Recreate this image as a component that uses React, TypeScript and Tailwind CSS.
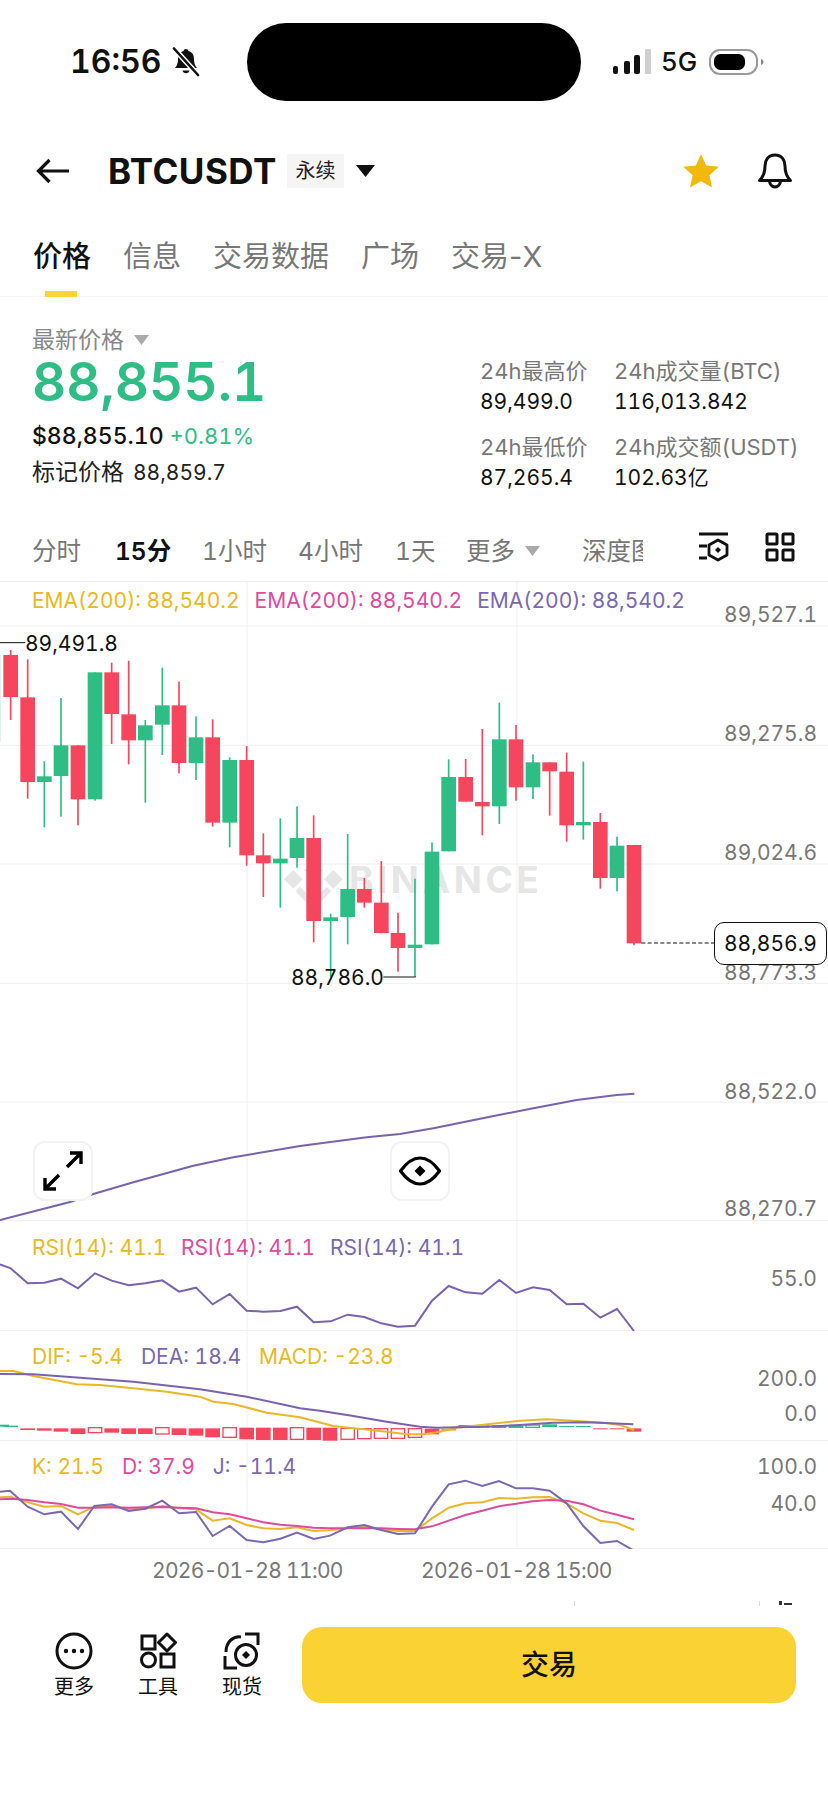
import React from 'react';

type C = [number, number, number, number, number, 0 | 1];
const candles: C[] = [
  [-2, 165, 165, 165, 425, 1],
  [32, 150, 165, 291, 360, 0],
  [83, 178, 292, 546, 596, 0],
  [133, 484, 529, 546, 682, 1],
  [183, 294, 436, 528, 650, 1],
  [234, 436, 436, 598, 676, 0],
  [285, 217, 217, 598, 602, 1],
  [335, 188, 217, 342, 432, 0],
  [386, 182, 343, 421, 493, 0],
  [436, 360, 376, 421, 608, 1],
  [487, 203, 316, 374, 465, 1],
  [537, 245, 316, 489, 520, 0],
  [588, 349, 412, 489, 540, 1],
  [638, 358, 412, 668, 680, 0],
  [689, 472, 480, 668, 742, 1],
  [740, 438, 480, 766, 797, 0],
  [790, 700, 766, 790, 891, 0],
  [841, 655, 776, 790, 923, 1],
  [891, 619, 714, 774, 803, 1],
  [941, 646, 714, 963, 1027, 0],
  [992, 941, 952, 963, 1130, 1],
  [1043, 702, 867, 951, 1033, 1],
  [1093, 834, 867, 908, 923, 0],
  [1144, 783, 908, 999, 1000, 0],
  [1194, 938, 999, 1044, 1115, 0],
  [1245, 836, 1034, 1044, 1130, 1],
  [1296, 727, 755, 1033, 1033, 1],
  [1346, 478, 531, 754, 754, 1],
  [1397, 477, 531, 605, 605, 0],
  [1447, 387, 606, 619, 706, 0],
  [1498, 308, 418, 619, 672, 1],
  [1548, 375, 418, 562, 602, 0],
  [1599, 463, 487, 562, 597, 1],
  [1649, 487, 487, 514, 647, 0],
  [1700, 458, 515, 676, 725, 0],
  [1750, 485, 666, 676, 719, 1],
  [1801, 639, 666, 834, 866, 0],
  [1851, 710, 737, 834, 874, 1],
  [1902, 735, 735, 1030, 1036, 0],
];

const pts = (a: number[][], dx = 0, dy = 0) => a.map(([x, y]) => `${x + dx},${y + dy}`).join(' ');

const ema = [[0, 600], [213, 545], [280, 522], [400, 487], [580, 437], [700, 412], [900, 378], [1100, 352], [1200, 342], [1300, 325], [1470, 290], [1600, 265], [1730, 240], [1850, 225], [1903, 221]];
const rsi = [[0, 733], [32, 745], [83, 790], [133, 788], [183, 776], [234, 805], [285, 760], [335, 782], [386, 796], [436, 790], [487, 781], [537, 815], [588, 803], [638, 853], [689, 822], [740, 872], [790, 875], [841, 873], [891, 860], [941, 907], [992, 904], [1043, 884], [1093, 891], [1144, 910], [1194, 920], [1245, 917], [1296, 842], [1346, 798], [1397, 817], [1447, 821], [1498, 780], [1548, 819], [1599, 802], [1649, 810], [1700, 853], [1750, 851], [1801, 893], [1851, 867], [1902, 933]];

const difA = [[0, -87], [40, -87], [100, -72], [230, -47], [300, -45], [400, -35], [500, -25], [600, -10], [640, 5], [700, 12], [800, 38], [900, 52]];
const difB = [[1000, 78], [1020, 80], [1090, 88], [1160, 95], [1220, 103], [1270, 103], [1320, 95], [1370, 83], [1470, 72], [1560, 62], [1640, 58], [1720, 62], [1810, 68], [1860, 75], [1902, 90]];
const deaA = [[0, -78], [100, -77], [200, -70], [400, -55], [600, -32], [740, -10], [900, 25]];
const deaB = [[960, 32], [1060, 48], [1160, 65], [1260, 80], [1310, 83], [1370, 82], [1460, 80], [1560, 75], [1660, 68], [1760, 67], [1900, 73]];

const jLine = [[0, 275], [30, 272], [83, 320], [133, 343], [183, 335], [234, 387], [283, 318], [335, 313], [386, 333], [436, 326], [487, 302], [537, 340], [588, 336], [638, 408], [689, 378], [740, 420], [790, 427], [841, 416], [891, 398], [941, 417], [990, 407], [1043, 382], [1093, 375], [1143, 390], [1194, 402], [1245, 400], [1296, 320], [1346, 253], [1396, 242], [1447, 258], [1497, 243], [1548, 265], [1598, 265], [1649, 272], [1700, 310], [1750, 378], [1801, 429], [1851, 423], [1902, 452]];
const kLine = [[0, 292], [32, 290], [83, 307], [133, 320], [183, 318], [234, 343], [283, 320], [335, 318], [386, 328], [436, 326], [487, 318], [537, 325], [588, 328], [638, 362], [689, 355], [740, 375], [790, 385], [841, 387], [891, 382], [941, 393], [990, 391], [1043, 385], [1093, 380], [1143, 388], [1194, 393], [1245, 393], [1296, 355], [1346, 323], [1396, 310], [1447, 307], [1497, 294], [1548, 296], [1598, 292], [1649, 291], [1700, 310], [1750, 340], [1801, 362], [1851, 369], [1902, 390]];
const dLine = [[0, 298], [32, 296], [83, 300], [133, 307], [183, 312], [234, 323], [283, 323], [335, 322], [386, 323], [436, 322], [487, 321], [537, 323], [588, 325], [638, 337], [689, 343], [740, 355], [790, 367], [841, 374], [891, 378], [941, 383], [990, 385], [1043, 385], [1093, 385], [1143, 385], [1194, 387], [1245, 388], [1296, 379], [1346, 362], [1396, 345], [1447, 332], [1497, 319], [1548, 311], [1598, 304], [1649, 300], [1700, 302], [1750, 313], [1801, 332], [1851, 344], [1902, 358]];

type B = [number, number, number, 's' | 'h', string];
const R = '#f6465d';
const G = '#2ebd85';
const bars: B[] = [
  [5, 74, 80, 's', G], [32, 77, 81, 's', G], [83, 85, 90, 's', R], [133, 85, 92, 's', R], [183, 85, 95, 's', R], [234, 85, 102, 's', R],
  [285, 83, 98, 'h', R], [335, 85, 98, 's', R], [386, 85, 102, 's', R], [436, 85, 102, 's', R], [487, 83, 102, 'h', R], [537, 85, 105, 's', R],
  [588, 85, 107, 's', R], [638, 85, 112, 's', R], [689, 83, 112, 'h', R], [740, 83, 118, 's', R], [790, 83, 120, 's', R], [841, 83, 120, 's', R],
  [891, 83, 118, 'h', R], [941, 83, 120, 's', R], [990, 83, 122, 's', R], [1043, 85, 118, 'h', R], [1093, 86, 116, 'h', R], [1143, 86, 115, 'h', R],
  [1194, 86, 115, 'h', R], [1245, 86, 112, 'h', R], [1296, 86, 103, 's', R], [1346, 86, 92, 's', '#f0a030'],
  [1397, 75, 83, 's', G], [1447, 76, 83, 's', G], [1497, 76, 84, 's', G], [1548, 76, 84, 's', G], [1598, 75, 82, 'h', G], [1649, 73, 81, 's', G],
  [1700, 78, 81, 's', G], [1750, 78, 81, 's', G], [1801, 85, 88, 's', R], [1851, 85, 88, 's', R], [1902, 85, 95, 's', R],
];

const axis = 'absolute right-[11px] text-[21px] leading-[26px] text-[#777777]';
const yellow = 'text-[#e8b923]';
const pink = 'text-[#dd4ba0]';
const purple = 'text-[#7a68b0]';

function VLines({ y0, y1 }: { y0: number; y1: number }) {
  return (
    <>
      <line x1={741} x2={741} y1={y0} y2={y1} stroke="#f0f0f0" strokeWidth={3} />
      <line x1={1551} x2={1551} y1={y0} y2={y1} stroke="#f0f0f0" strokeWidth={3} />
    </>
  );
}

function Legend({ items, className }: { items: [string, string][]; className: string }) {
  return (
    <div className={`relative z-10 flex pl-[32px] text-[21px] leading-[26px] ${className}`}>
      {items.map(([t, c], i) => (
        <span key={i} className={c}>{t}</span>
      ))}
    </div>
  );
}

function BellSlash() {
  return (
    <svg width="30" height="30" viewBox="0 0 30 30">
      <path d="M15 2c-1.4 0-2.2.9-2.4 2C8.5 5 7 8.2 7 12c0 4.500-1 6.500-3 9h22c-2-2.500-3-4.500-3-9 0-3.800-1.500-7-5.600-8C17.200 2.900 16.400 2 15 2z" fill="#111" />
      <path d="M11.500 23.500a3.600 3.600 0 0 0 7 0z" fill="#111" />
      <path d="M3 1.500 27 28" stroke="#fff" strokeWidth="5.500" />
      <path d="M3 1.500 27 28" stroke="#111" strokeWidth="2.600" strokeLinecap="round" />
    </svg>
  );
}

function StatusBar() {
  return (
    <div className="flex h-[125px] items-start pl-[70px]">
      <div className="flex h-[124px] w-[177px] items-center gap-[10px]">
        <span className="text-[32px] font-semibold leading-none text-[#111]">16:56</span>
        <BellSlash />
      </div>
      <div className="mt-[23px] h-[78px] w-[334px] rounded-[39px] bg-black" />
      <div className="ml-[31px] flex h-[124px] items-center">
        <svg width="40" height="26" viewBox="0 0 40 26">
          <rect x="1" y="17" width="5" height="8" rx="2" fill="#111" />
          <rect x="12" y="12" width="6" height="13" rx="2" fill="#111" />
          <rect x="22" y="6" width="6" height="19" rx="2" fill="#111" />
          <rect x="33" y="0" width="6" height="25" rx="1" fill="#cfcfcf" />
        </svg>
        <span className="ml-[9px] text-[26px] font-medium leading-none text-[#111]">5G</span>
        <svg className="ml-[12px]" width="56" height="26" viewBox="0 0 56 26">
          <rect x="1" y="1" width="47" height="24" rx="10" fill="none" stroke="#9a9a9a" strokeWidth="2" />
          <rect x="5" y="5" width="31" height="16" rx="6.500" fill="#000" />
          <path d="M52 10v6c1.600-.5 2.500-1.600 2.500-3s-.9-2.500-2.500-3z" fill="#888" />
        </svg>
      </div>
    </div>
  );
}

function Header() {
  return (
    <div className="flex h-[92px] items-center pl-[36px] pr-[36px]">
      <svg width="34" height="26" viewBox="0 0 34 26" fill="none" stroke="#111" strokeWidth="3.200">
        <path d="M33 13H3M13.500 2 2.500 13l11 11" />
      </svg>
      <span className="ml-[38px] text-[35px] font-bold leading-none tracking-[0.5px] text-[#111]">BTCUSDT</span>
      <span className="ml-[10px] flex h-[34px] w-[57px] items-center justify-center bg-[#f5f5f5] text-[20px] text-[#222]">永续</span>
      <svg className="ml-[12px]" width="19" height="12" viewBox="0 0 19 12">
        <path d="M0 0h19L9.500 12z" fill="#111" />
      </svg>
      <div className="flex-1" />
      <svg width="36" height="34" viewBox="0 0 36 34">
        <path d="M18 0l5.200 11.400 12.500 1.400-9.300 8.400 2.600 12.300L18 27.300 7 33.500l2.600-12.300L.3 12.800l12.500-1.400z" fill="#f0b90b" />
      </svg>
      <svg className="ml-[39px]" width="34" height="36" viewBox="0 0 34 36" fill="none" stroke="#111" strokeWidth="3">
        <path d="M17 2C10 2 7 7.500 7 13c0 6-1 10-5.500 14.500h31C28 23 27 19 27 13c0-5.500-3-11-10-11z" strokeLinejoin="round" />
        <path d="M11.500 28c.3 3.500 2.600 6 5.500 6s5.200-2.500 5.500-6" />
      </svg>
    </div>
  );
}

function Tabs() {
  return (
    <div className="flex h-[80px] items-start gap-[32px] border-b border-[#f3f3f3] pl-[33px] pt-[24px] text-[29px] leading-[32px] text-[#777] normal-nums">
      <span className="relative font-medium text-[#111]">
        价格
        <span className="absolute left-[12px] top-[50px] h-[6px] w-[32px] bg-[#fcd535]" />
      </span>
      <span>信息</span>
      <span>交易数据</span>
      <span>广场</span>
      <span>交易-X</span>
    </div>
  );
}

function Stat({ label, value }: { label: string; value: string }) {
  return (
    <div>
      <div className="text-[22px] leading-[26px] text-[#777]">{label}</div>
      <div className="mt-[5px] text-[21px] leading-[26px] text-[#111]">{value}</div>
    </div>
  );
}

function Price() {
  return (
    <div className="flex h-[223px] items-start pl-[32px]">
      <div className="w-[448px] pt-[29px]">
        <div className="flex items-center text-[#888]">
          <span className="text-[23px] leading-[28px]">最新价格</span>
          <svg className="ml-[10px]" width="15" height="10" viewBox="0 0 15 10"><path d="M0 0h15L7.500 10z" fill="#aaa" /></svg>
        </div>
        <div className="text-[53px] font-semibold leading-[56px] text-[#2ebd85]">88,855.1</div>
        <div className="mt-[12px] flex items-baseline gap-[6px] leading-[28px]">
          <span className="text-[23px] font-medium text-[#111]">$88,855.10</span>
          <span className="text-[22px] text-[#2ebd85]">+0.81%</span>
        </div>
        <div className="mt-[8px] flex items-baseline gap-[9px] leading-[28px] text-[#222]">
          <span className="text-[23px]">标记价格</span>
          <span className="text-[21px]">88,859.7</span>
        </div>
      </div>
      <div className="grid grid-cols-[134px_1fr] gap-y-[19px] pt-[61px]">
        <Stat label="24h最高价" value="89,499.0" />
        <Stat label="24h成交量(BTC)" value="116,013.842" />
        <Stat label="24h最低价" value="87,265.4" />
        <Stat label="24h成交额(USDT)" value="102.63亿" />
      </div>
    </div>
  );
}

function Intervals() {
  return (
    <div className="flex h-[62px] items-start border-b border-[#ededed] pl-[32px] text-[24.5px] leading-[30px] text-[#777]">
      <div className="flex items-center pt-[16px]">
        <span className="w-[83px]">分时</span>
        <span className="w-[87px] font-semibold text-[#111]">15分</span>
        <span className="w-[96px]">1小时</span>
        <span className="w-[97px]">4小时</span>
        <span className="w-[71px]">1天</span>
        <span>更多</span>
        <svg className="ml-[10px]" width="15" height="10" viewBox="0 0 15 10"><path d="M0 0h15L7.500 10z" fill="#aaa" /></svg>
        <span className="ml-[42px] w-[61px] overflow-hidden whitespace-nowrap">深度图</span>
      </div>
      <svg className="ml-[56px] mt-[12px]" width="30" height="30" viewBox="0 0 30 30" fill="none" stroke="#111" strokeWidth="2.800">
        <path d="M0 2h29M0 14h8M0 26h8" />
        <path d="M19 8l9 5v10l-9 5-9-5V13z" strokeLinejoin="round" />
        <path d="M19 15l3 3-3 3-3-3z" fill="#111" stroke="none" />
      </svg>
      <svg className="ml-[36px] mt-[12px]" width="30" height="30" viewBox="0 0 30 30" fill="none" stroke="#111" strokeWidth="3">
        <rect x="2" y="2" width="10" height="10" rx="1" />
        <rect x="18" y="2" width="10" height="10" rx="1" />
        <rect x="2" y="18" width="10" height="10" rx="1" />
        <rect x="18" y="18" width="10" height="10" rx="1" />
      </svg>
    </div>
  );
}

function MainPanel() {
  return (
    <div className="relative h-[639px] border-b border-[#f0f0f0]">
      <span className="absolute left-[349px] top-[278px] text-[37px] font-bold leading-[40px] tracking-[3.5px] text-[#e6e6e6]">BINANCE</span>
      <svg className="absolute inset-0" width="828" height="639" viewBox="0 -54 2484 1917">
        {[78, 436, 792, 1150, 1506].map((y) => (
          <line key={y} x1={0} x2={2484} y1={y} y2={y} stroke="#f0f0f0" strokeWidth={3} />
        ))}
        <VLines y0={-54} y1={1863} />
        <g fill="#e6e6e6">
          <path d="M940 838l-27-27 27-27 27 27zM880 810l-28 28 28 28 28-28zM1000 810l-28 28 28 28 28-28z" />
          <path d="M940 838m-15 0l15-15 15 15-15 15z" />
          <path d="M900 860l40 40 40-40 14 14-54 54-54-54z" />
        </g>
        <polyline points={pts(ema, 0, 1260)} fill="none" stroke="#7a62ae" strokeWidth={6} />
        {candles.map(([x, wt, bt, bb, wb, up], i) => {
          const color = up ? G : R;
          return (
            <g key={i} fill={color}>
              <rect x={x - 2.5} y={wt} width={5} height={wb - wt} />
              <rect x={x - 22} y={bt} width={44} height={bb - bt} />
            </g>
          );
        })}
        <path d="M0 128H76M1150 1131H1247V1130" stroke="#111" strokeWidth={3} fill="none" />
        <line x1={1924} x2={2142} y1={1029} y2={1029} stroke="#111" strokeWidth={3} strokeDasharray="12 7" />
      </svg>
      <Legend
        className="gap-[15px] pt-[6px]"
        items={[
          ['EMA(200): 88,540.2', yellow],
          ['EMA(200): 88,540.2', pink],
          ['EMA(200): 88,540.2', purple],
        ]}
      />
      <span className="absolute left-[25px] top-[49px] text-[21px] leading-[26px] text-[#111]">89,491.8</span>
      <span className="absolute left-[291px] top-[383px] text-[21px] leading-[26px] text-[#111]">88,786.0</span>
      <span className={`${axis} top-[20px]`}>89,527.1</span>
      <span className={`${axis} top-[139px]`}>89,275.8</span>
      <span className={`${axis} top-[258px]`}>89,024.6</span>
      <span className={`${axis} top-[378px]`}>88,773.3</span>
      <span className={`${axis} top-[497px]`}>88,522.0</span>
      <span className={`${axis} top-[614px]`}>88,270.7</span>
      <span className="absolute left-[714px] top-[340px] flex h-[43px] w-[113px] items-center justify-center rounded-[10px] border border-[#111] bg-white text-[21px] text-[#111]">88,856.9</span>
      <div className="absolute left-[33px] top-[559px] flex h-[60px] w-[60px] items-center justify-center rounded-[12px] border-2 border-[#f2f2f2] bg-white">
        <svg width="42" height="42" viewBox="0 0 42 42" fill="none" stroke="#000" strokeWidth="3.400">
          <path d="M25 17 39 3M28 3h11v11M17 25 3 39M3 28v11h11" />
        </svg>
      </div>
      <div className="absolute left-[390px] top-[559px] flex h-[60px] w-[60px] items-center justify-center rounded-[12px] border-2 border-[#f2f2f2] bg-white">
        <svg width="42" height="30" viewBox="0 0 42 30">
          <path d="M1.500 15C8 6 14 2 21 2s13 4 19.500 13C34 24 28 28 21 28S8 24 1.500 15z" fill="none" stroke="#000" strokeWidth="3.200" strokeLinejoin="round" />
          <path d="M21 9.500 26.500 15 21 20.500 15.500 15z" fill="#000" />
        </svg>
      </div>
    </div>
  );
}

function RsiPanel() {
  return (
    <div className="relative h-[110px] border-b border-[#f0f0f0]">
      <svg className="absolute inset-0" width="828" height="110" viewBox="0 603 2484 330">
        <VLines y0={603} y1={933} />
        <polyline points={pts(rsi)} fill="none" stroke="#7a62ae" strokeWidth={6} />
      </svg>
      <Legend
        className="gap-[15px] pt-[14px]"
        items={[
          ['RSI(14): 41.1', yellow],
          ['RSI(14): 41.1', pink],
          ['RSI(14): 41.1', purple],
        ]}
      />
      <span className={`${axis} top-[45px]`}>55.0</span>
    </div>
  );
}

function MacdPanel() {
  return (
    <div className="relative h-[110px] border-b border-[#f0f0f0]">
      <svg className="absolute inset-0" width="828" height="110" viewBox="0 -207 2484 330">
        <VLines y0={-207} y1={123} />
        {bars.map(([x, t, b, kind, color], i) =>
          kind === 's' ? (
            <rect key={i} x={x - 22} y={t} width={44} height={b - t} fill={color} />
          ) : (
            <rect key={i} x={x - 20} y={t} width={40} height={b - t} fill="#fff" stroke={color} strokeWidth={4} />
          ),
        )}
        <polyline points={pts([...difA, ...difB])} fill="none" stroke="#eab62a" strokeWidth={6} />
        <polyline points={pts([...deaA, ...deaB])} fill="none" stroke="#7a62ae" strokeWidth={6} />
      </svg>
      <Legend
        className="gap-[18px] pt-[13px]"
        items={[
          ['DIF: -5.4', yellow],
          ['DEA: 18.4', purple],
          ['MACD: -23.8', yellow],
        ]}
      />
      <span className={`${axis} top-[35px]`}>200.0</span>
      <span className={`${axis} top-[70px]`}>0.0</span>
    </div>
  );
}

function KdjPanel() {
  return (
    <div className="relative h-[108px] border-b border-[#f0f0f0]">
      <svg className="absolute inset-0" width="828" height="108" viewBox="0 123 2484 324">
        <VLines y0={123} y1={447} />
        <polyline points={pts(kLine)} fill="none" stroke="#eab62a" strokeWidth={6} />
        <polyline points={pts(dLine)} fill="none" stroke="#dd4ba0" strokeWidth={6} />
        <polyline points={pts(jLine)} fill="none" stroke="#7a68b0" strokeWidth={6} />
      </svg>
      <Legend
        className="gap-[18px] pt-[13px]"
        items={[
          ['K: 21.5', yellow],
          ['D: 37.9', pink],
          ['J: -11.4', purple],
        ]}
      />
      <span className={`${axis} top-[13px]`}>100.0</span>
      <span className={`${axis} top-[50px]`}>40.0</span>
    </div>
  );
}

function TimeAxis() {
  return (
    <div className="relative flex h-[78px] items-start pl-[152px] pt-[9px] text-[21px] leading-[26px] tracking-[-0.7px] text-[#777]">
      <span className="w-[269px]">2026-01-28 11:00</span>
      <span>2026-01-28 15:00</span>
      <svg className="absolute left-[570px] top-[52px]" width="230" height="6" viewBox="0 0 230 6">
        <rect x="4" y="0" width="1" height="5" fill="#ddd" />
        <rect x="189" y="0" width="1" height="5" fill="#ddd" />
        <rect x="209" y="0" width="3" height="4" fill="#333" />
        <rect x="214" y="2" width="8" height="2" fill="#333" />
      </svg>
    </div>
  );
}

function NavItem({ label, children }: { label: string; children: React.ReactNode }) {
  return (
    <div className="mt-[5px] flex w-[84px] flex-col items-center">
      {children}
      <span className="mt-[5px] text-[20px] leading-[24px] text-[#111]">{label}</span>
    </div>
  );
}

function Bottom() {
  return (
    <div className="flex items-start pl-[32px]">
      <NavItem label="更多">
        <svg width="38" height="38" viewBox="0 0 38 38" fill="none" stroke="#111" strokeWidth="3">
          <circle cx="19" cy="19" r="17" />
          <circle cx="11" cy="19" r="2.200" fill="#111" stroke="none" />
          <circle cx="19" cy="19" r="2.200" fill="#111" stroke="none" />
          <circle cx="27" cy="19" r="2.200" fill="#111" stroke="none" />
        </svg>
      </NavItem>
      <NavItem label="工具">
        <svg width="38" height="38" viewBox="0 0 38 38" fill="none" stroke="#111" strokeWidth="3">
          <rect x="3" y="4" width="13" height="13" />
          <path d="M28 2l8.500 8.500-8.500 8.500-8.500-8.500z" strokeLinejoin="round" />
          <circle cx="9.500" cy="28" r="7" />
          <rect x="22" y="22" width="13" height="13" />
        </svg>
      </NavItem>
      <NavItem label="现货">
        <svg width="38" height="38" viewBox="0 0 38 38" fill="none" stroke="#111" strokeWidth="3">
          <path d="M22 2h13v11M2 24v12h12" />
          <circle cx="23" cy="23" r="10.500" />
          <path d="M3 20C3 9 11 4 18 5" />
          <path d="M23 19l4 4-4 4-4-4z" fill="#111" stroke="none" />
        </svg>
      </NavItem>
      <button className="ml-[18px] flex h-[76px] w-[494px] items-center justify-center rounded-[20px] bg-[#fbd233] text-[28px] font-medium text-[#111]">
        交易
      </button>
    </div>
  );
}

export default function App() {
  return (
    <div className="h-[1796px] w-[828px] overflow-hidden bg-white font-['Inter','Noto_Sans_CJK_SC',sans-serif] tabular-nums">
      <StatusBar />
      <Header />
      <Tabs />
      <Price />
      <Intervals />
      <MainPanel />
      <RsiPanel />
      <MacdPanel />
      <KdjPanel />
      <TimeAxis />
      <Bottom />
    </div>
  );
}
